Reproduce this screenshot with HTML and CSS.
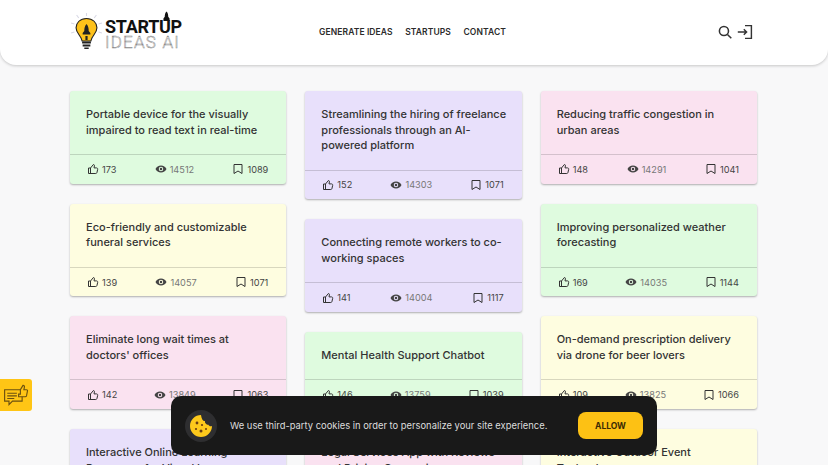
FILE: index.html
```html
<!DOCTYPE html>
<html>

<head>
    <title>Startup Ideas AI</title>
    <link rel="stylesheet" href="styles.css">
</head>

<body>
    <svg class="sprites" width="0" height="0">
        <symbol id="thumb" viewBox="0 0 24 24">
            <path d="M7 10v11M7 10H3v11h14.500c1.200 0 2.100-.8 2.400-1.900l1.500-6.500c.3-1.500-.8-2.800-2.300-2.800H14l.9-4.300c.2-1.300-.8-2.500-2.100-2.500L7 10z"/>
        </symbol>
        <symbol id="eye" viewBox="0 0 24 24">
            <path class="solid" d="M12 5C7 5 3 8 1 12c2 4 6 7 11 7s9-3 11-7c-2-4-6-7-11-7zm0 11.500a4.500 4.500 0 1 1 0-9 4.500 4.500 0 0 1 0 9zm0-7a2.500 2.500 0 1 0 0 5 2.500 2.500 0 0 0 0-5z"/>
        </symbol>
        <symbol id="mark" viewBox="0 0 24 24">
            <path d="M4 3h16v18l-8-5-8 5z"/>
        </symbol>
    </svg>

    <header class="topbar">
        <a class="logo" href="#">
            <svg class="bulb" viewBox="0 0 30 40" width="33" height="40" preserveAspectRatio="none">
                <g stroke="#d9d9e6" stroke-width="1" fill="none">
                    <path d="M15 0v3M6 2l2 3M24 2l-2 3M1 10l3 1M29 10l-3 1M1 20l3-1M29 20l-3-1"/>
                </g>
                <path d="M15 5.500c-5.800 0-9.500 4.300-9.500 9.300 0 5.700 4.800 7.500 5.500 13.200h8c.7-5.700 5.500-7.500 5.500-13.200 0-5-3.700-9.300-9.500-9.300z" fill="#fdc11a" stroke="#222" stroke-width="1"/>
                <path d="M15 11c-1.600 2-2 4-2 7l-1.500 2v1.500h7V20L17 18c0-3-.4-5-2-7z" fill="#222"/>
                <path d="M14 23h2v4h-2z" fill="#222"/>
                <path d="M11 28.500h8v2h-8zM11.500 31.500h7v2h-7zM13 34.500h4v1.500h-4z" fill="#222"/>
            </svg>
            <div class="logo-text">
                <span class="logo-top">STARTUP</span>
                <span class="logo-bottom">IDEAS AI</span>
                <svg class="rocket" viewBox="0 0 8 14" width="7" height="13">
                    <path d="M4 0c1.500 1.500 2 3.500 2 6l1.500 2v3H.5V8L2 6c0-2.500.500-4.500 2-6z" fill="#111"/>
                </svg>
            </div>
        </a>

        <nav class="nav">
            <a href="#">GENERATE IDEAS</a>
            <a href="#">STARTUPS</a>
            <a href="#">CONTACT</a>
        </nav>

        <div class="tools">
            <svg class="tool search" viewBox="0 0 20 20" width="14" height="14">
                <circle cx="8.500" cy="8.500" r="6.500"/>
                <path d="M13.500 13.500L19 19"/>
            </svg>
            <svg class="tool" viewBox="0 0 20 20" width="16" height="16">
                <path d="M10 2h8v16h-8M1 10h11M8.500 6.500L12 10l-3.500 3.500"/>
            </svg>
        </div>
    </header>

    <main class="grid">
        <div class="column">
            <div class="card green">
                <p class="idea">Portable device for the visually impaired to read text in real-time</p>
                <div class="stats">
                    <span class="stat"><svg class="icon"><use href="#thumb"/></svg>173</span>
                    <span class="stat views"><svg class="icon"><use href="#eye"/></svg>14512</span>
                    <span class="stat"><svg class="icon"><use href="#mark"/></svg>1089</span>
                </div>
            </div>
            <div class="card yellow">
                <p class="idea">Eco-friendly and customizable funeral services</p>
                <div class="stats">
                    <span class="stat"><svg class="icon"><use href="#thumb"/></svg>139</span>
                    <span class="stat views"><svg class="icon"><use href="#eye"/></svg>14057</span>
                    <span class="stat"><svg class="icon"><use href="#mark"/></svg>1071</span>
                </div>
            </div>
            <div class="card pink">
                <p class="idea">Eliminate long wait times at doctors' offices</p>
                <div class="stats">
                    <span class="stat"><svg class="icon"><use href="#thumb"/></svg>142</span>
                    <span class="stat views"><svg class="icon"><use href="#eye"/></svg>13849</span>
                    <span class="stat"><svg class="icon"><use href="#mark"/></svg>1063</span>
                </div>
            </div>
            <div class="card purple">
                <p class="idea">Interactive Online Learning Resources for Visual Learners</p>
            </div>
        </div>

        <div class="column">
            <div class="card purple">
                <p class="idea">Streamlining the hiring of freelance professionals through an AI-powered platform</p>
                <div class="stats">
                    <span class="stat"><svg class="icon"><use href="#thumb"/></svg>152</span>
                    <span class="stat views"><svg class="icon"><use href="#eye"/></svg>14303</span>
                    <span class="stat"><svg class="icon"><use href="#mark"/></svg>1071</span>
                </div>
            </div>
            <div class="card purple">
                <p class="idea">Connecting remote workers to co-working spaces</p>
                <div class="stats">
                    <span class="stat"><svg class="icon"><use href="#thumb"/></svg>141</span>
                    <span class="stat views"><svg class="icon"><use href="#eye"/></svg>14004</span>
                    <span class="stat"><svg class="icon"><use href="#mark"/></svg>1117</span>
                </div>
            </div>
            <div class="card green">
                <p class="idea">Mental Health Support Chatbot</p>
                <div class="stats">
                    <span class="stat"><svg class="icon"><use href="#thumb"/></svg>146</span>
                    <span class="stat views"><svg class="icon"><use href="#eye"/></svg>13759</span>
                    <span class="stat"><svg class="icon"><use href="#mark"/></svg>1039</span>
                </div>
            </div>
            <div class="card pink">
                <p class="idea">Legal Services App with Reviews and Pricing Comparison</p>
            </div>
        </div>

        <div class="column">
            <div class="card pink">
                <p class="idea">Reducing traffic congestion in urban areas</p>
                <div class="stats">
                    <span class="stat"><svg class="icon"><use href="#thumb"/></svg>148</span>
                    <span class="stat views"><svg class="icon"><use href="#eye"/></svg>14291</span>
                    <span class="stat"><svg class="icon"><use href="#mark"/></svg>1041</span>
                </div>
            </div>
            <div class="card green">
                <p class="idea">Improving personalized weather forecasting</p>
                <div class="stats">
                    <span class="stat"><svg class="icon"><use href="#thumb"/></svg>169</span>
                    <span class="stat views"><svg class="icon"><use href="#eye"/></svg>14035</span>
                    <span class="stat"><svg class="icon"><use href="#mark"/></svg>1144</span>
                </div>
            </div>
            <div class="card yellow">
                <p class="idea">On-demand prescription delivery via drone for beer lovers</p>
                <div class="stats">
                    <span class="stat"><svg class="icon"><use href="#thumb"/></svg>109</span>
                    <span class="stat views"><svg class="icon"><use href="#eye"/></svg>13825</span>
                    <span class="stat"><svg class="icon"><use href="#mark"/></svg>1066</span>
                </div>
            </div>
            <div class="card yellow">
                <p class="idea">Interactive Outdoor Event Technology</p>
            </div>
        </div>
    </main>

    <!-- Feedback tab on the left edge -->
    <a class="feedback" href="#">
        <svg viewBox="0 0 32 32" width="28" height="28" fill="none" stroke="#6b5010" stroke-width="1.300">
            <path d="M3 10h20v13H12l-4 4v-4H3z"/>
            <path d="M6 14h11M6 17h11M6 20h8"/>
            <path d="M19 15h2v-5l3-5c1.500 0 2 1 1.500 2.500L25 10h3c1 0 1.500 1 1 2l-1 5c-.2.700-.8 1-1.500 1H19z" fill="#ffc515"/>
        </svg>
    </a>

    <!-- Cookie notice -->
    <div class="cookie">
        <div class="cookie-badge">
            <svg viewBox="0 0 24 24" width="24" height="24">
                <path d="M12 1a11 11 0 1 0 11 11c-1.500.7-3 .2-3.500-1.200C17.500 11 15.500 9 16 7c-2 .3-3.500-1.800-4-6z" fill="#fdc91c"/>
                <circle cx="8" cy="9" r="1.400" fill="#6b3d12"/>
                <circle cx="13" cy="11" r="1.100" fill="#6b3d12"/>
                <circle cx="7" cy="15" r="1.100" fill="#6b3d12"/>
                <circle cx="12" cy="17" r="1.500" fill="#6b3d12"/>
                <circle cx="17" cy="15" r="1" fill="#6b3d12"/>
            </svg>
        </div>
        <p class="cookie-text">We use third-party cookies in order to personalize your site experience.</p>
        <button class="allow">ALLOW</button>
    </div>
</body>

</html>
```

FILE: styles.css
```css
* {
    box-sizing: border-box;
}

html, body {
    height: 100%;
}

body {
    margin: 0;
    overflow: hidden;
    font-family: Inter, "Open Sans", sans-serif;
    background-color: #f8f8f9;
    color: #333;
}

a {
    color: inherit;
    text-decoration: none;
}

.sprites {
    position: absolute;
}

.topbar {
    display: flex;
    align-items: center;
    height: 65px;
    padding: 0 75px 0 70px;
    background-color: #fff;
    border-radius: 0 0 16px 16px;
    box-shadow: 0 1px 3px rgba(0, 0, 0, 0.2);
}

.logo {
    display: flex;
    align-items: center;
    gap: 2px;
    width: 249px;
}

.bulb {
    flex: none;
}

.logo-text {
    position: relative;
    display: flex;
    flex-direction: column;
    margin-top: 3px;
}

.logo-top {
    font-family: Roboto, sans-serif;
    font-size: 18px;
    font-weight: 700;
    line-height: 16px;
    letter-spacing: -0.3px;
    color: #111;
}

.logo-bottom {
    font-family: Roboto, sans-serif;
    font-size: 17px;
    font-weight: 300;
    line-height: 15px;
    color: #fff;
    letter-spacing: 1.2px;
    -webkit-text-stroke: 0.5px #8a8a8a;
}

.rocket {
    position: absolute;
    top: -8px;
    left: 58px;
}

.nav {
    display: flex;
    gap: 12.5px;
    padding-bottom: 1px;
    font-size: 8.5px;
    font-weight: 600;
    letter-spacing: 0.1px;
    color: #2b2b2b;
}

.tools {
    display: flex;
    align-items: center;
    gap: 5px;
    margin-left: auto;
    margin-bottom: 2px;
}

.tool {
    fill: none;
    stroke: #333;
    stroke-width: 1.8;
}

.search {
    stroke-width: 2.2;
}

.grid {
    display: flex;
    gap: 19px;
    padding: 26px 71px 0 70px;
}

.column {
    display: flex;
    flex-direction: column;
    flex: 1;
    gap: 20px;
}

.card {
    border-radius: 3px;
    box-shadow: 0 1px 2px rgba(0, 0, 0, 0.3);
}

.green {
    background-color: #dffbdf;
}

.yellow {
    background-color: #fefde0;
}

.pink {
    background-color: #fae2f0;
}

.purple {
    background-color: #e8e0fb;
}

.idea {
    margin: 0;
    padding: 16px 13px 16px 16px;
    font-size: 11px;
    font-weight: 500;
    line-height: 15.5px;
    color: #333;
}

.stats {
    display: flex;
    justify-content: space-between;
    align-items: center;
    height: 29.7px;
    padding: 0 18px 0 17px;
    border-top: 1px solid rgba(0, 0, 0, 0.15);
    font-size: 9.2px;
    color: #444;
}

.stat {
    display: flex;
    align-items: center;
    gap: 3px;
}

.views {
    color: #777;
}

.icon {
    width: 12px;
    height: 12px;
    fill: none;
    stroke: #333;
    stroke-width: 2;
}

.solid {
    fill: #444;
    stroke: none;
}

.feedback {
    position: fixed;
    left: 0;
    top: 379px;
    display: flex;
    align-items: center;
    justify-content: center;
    width: 32px;
    height: 32px;
    background-color: #ffc515;
    border-radius: 0 3px 3px 0;
}

.cookie {
    position: fixed;
    left: 171px;
    top: 396px;
    display: flex;
    align-items: center;
    width: 486px;
    height: 59px;
    padding: 0 14px;
    background-color: #191919;
    border-radius: 10px;
}

.cookie-badge {
    display: flex;
    align-items: center;
    justify-content: center;
    flex: none;
    width: 32px;
    height: 32px;
    background-color: #2e2e30;
    border-radius: 50%;
}

.cookie-text {
    flex: 1;
    margin: 0 0 0 13px;
    font-size: 9.4px;
    color: #ddd;
}

.allow {
    width: 65px;
    height: 27px;
    background-color: #fdc114;
    color: #3a2b05;
    font-family: inherit;
    font-size: 8.5px;
    font-weight: 700;
    border: none;
    border-radius: 8px;
}
```
